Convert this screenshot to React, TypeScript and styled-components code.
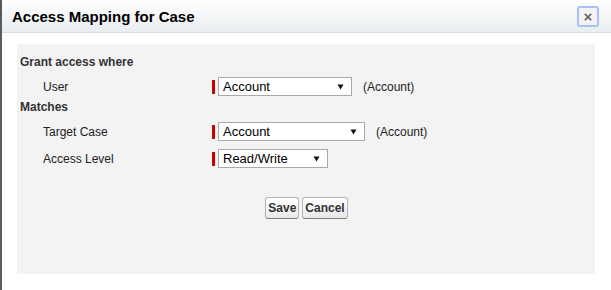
import styled, {createGlobalStyle} from 'styled-components';

const GlobalStyle = createGlobalStyle`
    html, body {
        margin: 0;
        padding: 0;
        background: #ffffff;
    }
    body {
        font-family: "Liberation Sans", Arial, sans-serif;
        color: #222;
    }
`

type Field = {
    label: string;
    value: string;
    width: number;
    note?: string;
    gap?: number;
};

const grantFields: Field[] = [
    {label: 'User', value: 'Account', width: 134, note: '(Account)'},
];

const matchFields: Field[] = [
    {label: 'Target Case', value: 'Account', width: 147, note: '(Account)', gap: 4},
    {label: 'Access Level', value: 'Read/Write', width: 110, gap: 2},
];

const Arrow = () => (
    <svg width="7" height="6" viewBox="0 0 7 6">
        <polygon points="0.5,0.5 6.5,0.5 3.5,5.5" fill="#111"/>
    </svg>
);

const FieldLine = ({field}: {field: Field}) => (
    <Row $gap={field.gap ?? 4}>
        <Label>{field.label}</Label>
        <Control>
            <Required/>
            <SelectBox style={{width: field.width}}>
                <span>{field.value}</span>
                <Arrow/>
            </SelectBox>
            {field.note && <Note>{field.note}</Note>}
        </Control>
    </Row>
);

export default function App() {
    return (
        <>
            <GlobalStyle/>
            <Dialog>
                <Header>
                    <Title>Access Mapping for Case</Title>
                    <CloseButton aria-label="Close">×</CloseButton>
                </Header>
                <Body>
                    <Panel>
                        <SectionTitle>Grant access where</SectionTitle>
                        {grantFields.map(f => <FieldLine key={f.label} field={f}/>)}
                        <SectionTitle>Matches</SectionTitle>
                        {matchFields.map(f => <FieldLine key={f.label} field={f}/>)}
                        <Buttons>
                            <Button>Save</Button>
                            <Button>Cancel</Button>
                        </Buttons>
                    </Panel>
                </Body>
            </Dialog>
        </>
    );
}

const Dialog = styled.div`
    width: 611px;
    height: 290px;
    box-sizing: border-box;
    border-left: 2px solid #5b5b5b;
    background: #fff;
    display: flex;
    flex-direction: column;
`

const Header = styled.div`
    height: 32px;
    flex-shrink: 0;
    display: flex;
    align-items: center;
    justify-content: space-between;
    padding: 0 12px 0 10px;
    background: linear-gradient(#ffffff, #e9edef);
    border-bottom: 1px solid #d6dbde;
`

const Title = styled.h2`
    margin: 0;
    font-size: 15px;
    font-weight: bold;
    color: #000;
`

const CloseButton = styled.button`
    width: 22px;
    height: 21px;
    padding: 0;
    margin-top: 1px;
    border: 2px solid #a7c1f2;
    border-radius: 3px;
    background: #f3f3f3;
    color: #666;
    font-family: "Liberation Sans", Arial, sans-serif;
    font-size: 15px;
    font-weight: bold;
    line-height: 15px;
`

const Body = styled.div`
    flex: 1;
    padding: 11px 16px 16px 15px;
    display: flex;
`

const Panel = styled.div`
    flex: 1;
    background: #f3f3f3;
    padding: 10px 3px 0 3px;
    font-size: 12px;
`

const SectionTitle = styled.div`
    font-weight: bold;
    font-size: 12px;
    line-height: 16px;
    height: 16px;
    color: #333;
`

const Row = styled.div<{$gap: number}>`
    display: grid;
    grid-template-columns: 192px auto;
    align-items: center;
    height: 25px;
    margin-top: ${p => p.$gap}px;
`

const Label = styled.div`
    padding-left: 23px;
    color: #222;
    font-size: 12px;
`

const Control = styled.div`
    display: flex;
    align-items: center;
`

const Required = styled.span`
    width: 3px;
    height: 14px;
    background: #c00;
    margin-right: 3px;
`

const SelectBox = styled.div`
    box-sizing: border-box;
    height: 19px;
    border: 1px solid #a9a9a9;
    background: #fff;
    display: flex;
    align-items: center;
    justify-content: space-between;
    padding: 0 7px 0 4px;
    font-size: 13px;
    color: #000;
`

const Note = styled.span`
    margin-left: 11px;
    font-size: 12px;
    color: #222;
`

const Buttons = styled.div`
    display: flex;
    justify-content: center;
    gap: 3px;
    margin-top: 26px;
    padding-left: 1px;
`

const Button = styled.button`
    height: 22px;
    padding: 0 2px;
    border: 1px solid #b5b5b5;
    border-bottom-color: #7f7f7f;
    border-radius: 3px;
    background: linear-gradient(#ffffff, #e8e8e8);
    font-family: "Liberation Sans", Arial, sans-serif;
    font-size: 12px;
    font-weight: bold;
    color: #333;
`
